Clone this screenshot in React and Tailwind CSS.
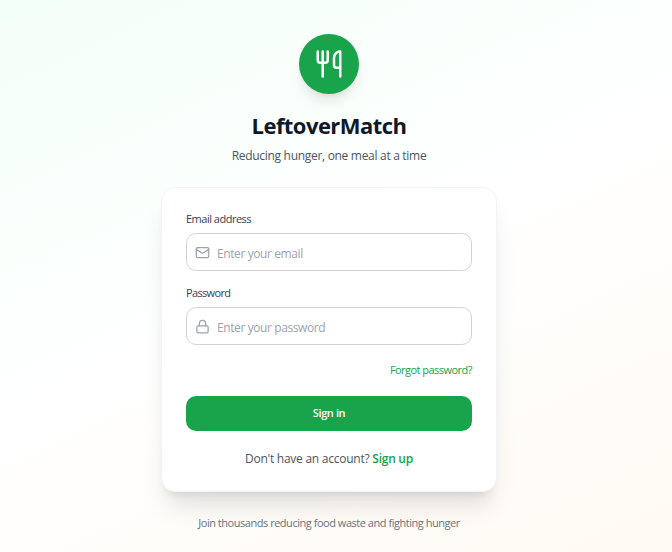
import React, { useState } from 'react';
import { Lock, Mail, Utensils } from 'lucide-react';

const Field = ({ label, icon: Icon, type, placeholder, labelClass }) => {
  const [value, setValue] = useState('');

  return (
    <label className="block">
      <span className={`block h-4 text-[11px] leading-4 font-medium text-[#374151] whitespace-nowrap ${labelClass}`}>{label}</span>
      <span className="mt-1.5 flex h-[38px] items-center rounded-[10px] border border-[#d1d5db] bg-white pl-2">
        <Icon className="size-[15px] shrink-0 text-[#9ca3af]" strokeWidth={2} />
        <input
          type={type}
          value={value}
          onChange={(e) => setValue(e.target.value)}
          placeholder={placeholder}
          className="ml-[7px] h-full min-w-0 flex-1 bg-transparent pt-[2px] text-xs tracking-[-0.4px] text-gray-900 outline-none placeholder:text-[#9ca3af]"
        />
      </span>
    </label>
  );
};

const App = () => (
  <div className="h-[552px] overflow-hidden bg-[linear-gradient(155deg,#f3fff9_0%,#ffffff_50%,#fffaf3_100%)] pr-[14px] font-['Open_Sans',sans-serif]">
    <div className="mx-auto flex w-[336px] flex-col pt-[34px]">
      {/* Logo and tagline */}
      <header className="flex flex-col items-center">
        <div className="flex size-[60px] items-center justify-center rounded-full bg-[#19a44b] shadow-lg">
          <Utensils className="size-[30px] text-white" strokeWidth={2} />
        </div>
        <h1 className="mt-[15px] h-8 text-[22px] leading-8 font-bold tracking-[-0.55px] text-[#111827]">LeftoverMatch</h1>
        <p className="mt-[6px] h-[18px] text-xs leading-[18px] tracking-[-0.3px] text-[#4b5563]">Reducing hunger, one meal at a time</p>
      </header>

      {/* Sign in card */}
      <form className="mt-[22px] h-[305px] rounded-[14px] border border-[#f3f4f6] bg-white px-6 pt-[23px] shadow-xl" onSubmit={(e) => e.preventDefault()}>
        <Field label="Email address" icon={Mail} type="email" placeholder="Enter your email" labelClass="tracking-[-0.5px]" />
        <div className="mt-3.5">
          <Field label="Password" icon={Lock} type="password" placeholder="Enter your password" labelClass="tracking-[-0.65px]" />
        </div>
        <div className="mt-[17px] flex h-4 justify-end">
          <a href="#" className="text-[11px] leading-4 tracking-[-0.53px] text-[#16a34a]">Forgot password?</a>
        </div>
        <button type="submit" className="mt-[18px] flex h-[35px] w-full items-center justify-center rounded-[10px] bg-[#19a44b] text-[11px] font-semibold tracking-[-0.4px] text-white">
          Sign in
        </button>
        <p className="mt-[19px] text-center text-xs leading-[18px] tracking-[-0.25px] text-[#4b5563]">
          Don't have an account? <a href="#" className="font-semibold text-[#16a34a]">Sign up</a>
        </p>
      </form>

      <p className="mt-[23px] text-center text-[11px] leading-4 tracking-[-0.47px] text-[#6b7280]">
        Join thousands reducing food waste and fighting hunger
      </p>
    </div>
  </div>
);

export default App;
